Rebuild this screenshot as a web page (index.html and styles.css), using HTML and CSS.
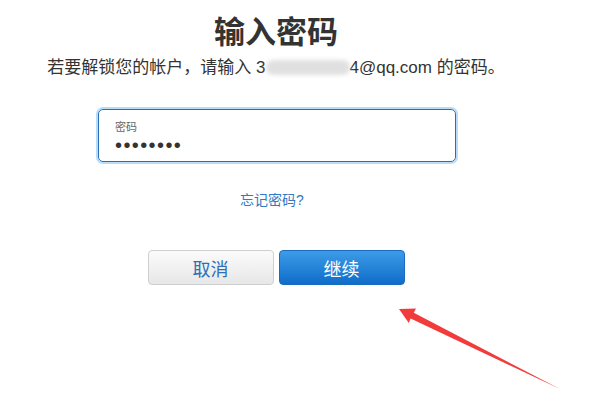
FILE: index.html
```html
<!DOCTYPE html>
<html lang="zh-CN">
<head>
    <meta charset="UTF-8">
    <title>输入密码</title>
    <link rel="stylesheet" href="styles.css">
</head>
<body>
<div class="page">
    <h1 class="title">输入密码</h1>
    <p class="subtitle">若要解锁您的帐户，请输入 3<span class="masked"></span>4@qq.com 的密码。</p>

    <!-- 密码输入框 -->
    <div class="field">
        <label class="field-label" for="pwd">密码</label>
        <div class="field-value" id="pwd">&#8226;&#8226;&#8226;&#8226;&#8226;&#8226;&#8226;&#8226;</div>
    </div>

    <a class="forgot" href="#">忘记密码?</a>

    <div class="actions">
        <button class="btn btn-cancel" type="button">取消</button>
        <button class="btn btn-continue" type="button">继续</button>
    </div>
</div>

<!-- 标注箭头 -->
<svg class="arrow" width="603" height="404" viewBox="0 0 603 404">
    <polygon points="399,309 416,308.5 413.8,312.8 560,389 410.6,318.6 408.8,322.9" fill="#f23b3b"/>
</svg>
</body>
</html>
```

FILE: styles.css
```css
body {
    margin: 0;
    padding: 0;
    background-color: #ffffff;
    font-family: "Liberation Sans", "Noto Sans CJK SC", sans-serif;
    color: #333333;
}
.page {
    width: 552px;
    text-align: center;
    padding-top: 8px;
}
.title {
    margin: 0;
    font-family: "Noto Sans CJK SC", sans-serif;
    font-size: 31px;
    font-weight: bold;
    line-height: 44px;
    color: #333333;
}
.subtitle {
    margin: 4px 0 0 0;
    font-size: 17px;
    line-height: 24px;
    color: #333333;
}
.subtitle .masked {
    display: inline-block;
    width: 84px;
    height: 15px;
    vertical-align: -2px;
    background-color: #e0e0e0;
    border-radius: 7px;
    filter: blur(2px);
}

/* 输入框 */
.field {
    width: 358px;
    height: 53px;
    margin: 29px 0 0 98px;
    border: 1px solid #2a6fb5;
    border-radius: 5px;
    box-shadow: 0 0 0 2px #b9ddf8;
    text-align: left;
    padding: 0 0 0 16px;
    box-sizing: border-box;
}
.field-label {
    display: block;
    margin-top: 10px;
    font-size: 11px;
    line-height: 14px;
    color: #666666;
}
.field-value {
    margin-top: 2px;
    font-size: 20px;
    line-height: 18px;
    letter-spacing: 1.4px;
    color: #333333;
}

.forgot {
    display: inline-block;
    margin: 28px 8px 0 0;
    font-size: 14px;
    line-height: 20px;
    color: #3179c2;
    text-decoration: none;
}

/* 按钮 */
.actions {
    display: flex;
    justify-content: center;
    gap: 5px;
    margin-top: 40px;
}
.btn {
    width: 126px;
    height: 35px;
    border-radius: 4px;
    font-family: "Noto Sans CJK SC", sans-serif;
    font-size: 18px;
    cursor: pointer;
    padding: 0;
}
.btn-cancel {
    background: linear-gradient(#fbfbfb, #e7e7e7);
    border: 1px solid #cfcfcf;
    color: #2d6fb8;
}
.btn-continue {
    background: linear-gradient(#3d9be8, #0f6dc9);
    border: 1px solid #1b6cc0;
    color: #ffffff;
}

.arrow {
    position: absolute;
    left: 0;
    top: 0;
    pointer-events: none;
}
```
